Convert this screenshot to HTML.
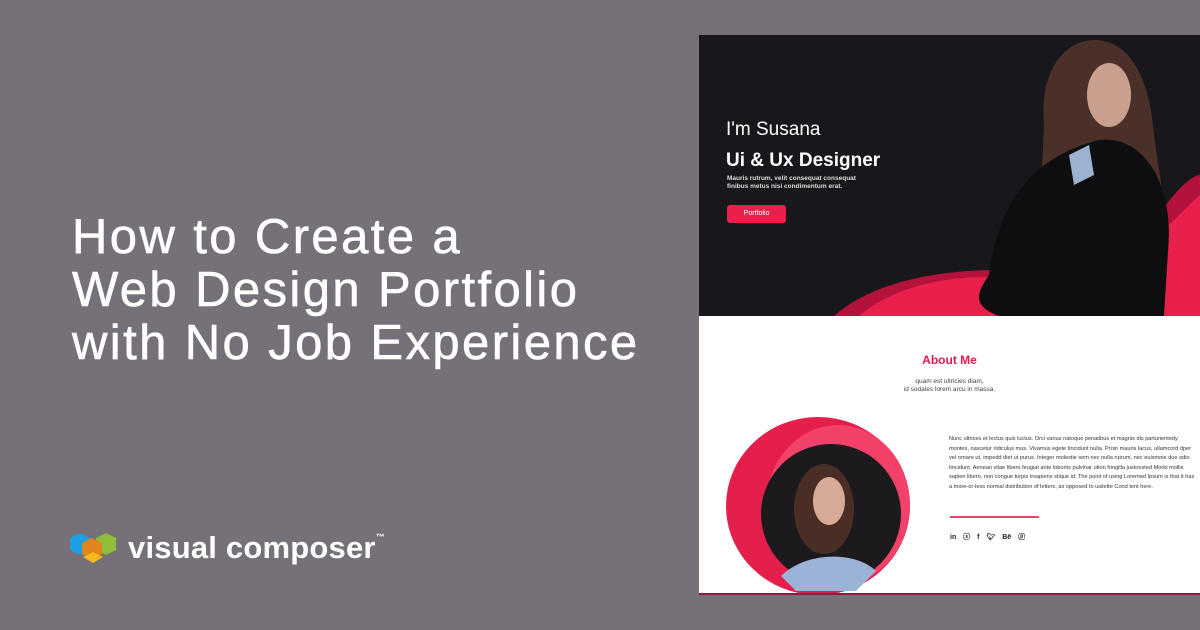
<!DOCTYPE html>
<html><head><meta charset="utf-8"><style>
*{margin:0;padding:0;box-sizing:border-box}
body{width:1200px;height:630px;background:#767179;position:relative;overflow:hidden;font-family:"Liberation Sans",sans-serif}
.title{position:absolute;left:72px;top:211px;color:#fff;font-size:49px;line-height:53px;font-weight:400;letter-spacing:2.4px;-webkit-text-stroke:0.6px #fff}
.logo{position:absolute;left:70px;top:530px;display:flex;align-items:center}
.logo span{color:#fff;font-size:31px;font-weight:700;margin-left:10px;letter-spacing:0.2px}
.logo sup{font-size:9px;vertical-align:top;position:relative;top:2px}
.shot{position:absolute;left:699px;top:35px;width:501px;height:560px;background:#fff;overflow:hidden;border-bottom:2px solid #8b1d3d}
.hero{position:absolute;left:0;top:0;width:501px;height:281px;background:#18171c;overflow:hidden}
.t1{position:absolute;left:27px;top:84px;color:#fff;font-size:19px;font-weight:300}
.t2{position:absolute;left:27px;top:115px;color:#fff;font-size:19px;font-weight:700}
.t3{position:absolute;left:28px;top:140px;color:#ddd;font-size:6.5px;line-height:7.5px;font-weight:700}
.btn{position:absolute;left:28px;top:170px;width:59px;height:18px;background:#e8204b;border-radius:3px;color:#fff;font-size:7px;text-align:center;line-height:18px}
.about{position:absolute;left:0;top:318px;width:501px;text-align:center;color:#e3194a;font-weight:700;font-size:12px}
.sub{position:absolute;left:0;top:343px;width:501px;text-align:center;color:#444;font-size:6.5px;line-height:8px}
.para{position:absolute;left:250px;top:400px;width:246px;color:#333;font-size:5.6px;line-height:9.6px}
.line{position:absolute;left:251px;top:481px;width:89px;height:2px;background:#f04368}
.soc{position:absolute;left:251px;top:497px;font-size:7px;color:#222;font-weight:700;word-spacing:5px}
</style></head><body>
<div class="title">How to Create a<br>Web Design Portfolio<br>with No Job Experience</div>
<div class="logo">
<svg width="48" height="36" viewBox="0 0 48 36">
<polygon points="0,8 10,3 20,8 20,20 10,25 0,20" fill="#1e9fe0"/>
<polygon points="26,8 36,3 46,8 46,20 36,25 26,20" fill="#8dbf3a"/>
<polygon points="12,13 22,8 32,13 32,24 22,29 12,24" fill="#e0851c"/>
<polygon points="13,27 23,22 33,27 23,33" fill="#f6b81e"/>
</svg>
<span>visual composer<sup>™</sup></span></div>
<div class="shot">
<div class="hero">
<svg width="501" height="281" style="position:absolute;left:0;top:0">
<path d="M135,281 C170,250 230,235 300,235 C380,238 420,220 460,180 C480,150 495,140 501,140 L501,281Z" fill="#b3123a"/>
<path d="M160,281 C190,255 240,240 300,242 C380,246 430,225 470,190 C490,170 501,160 501,160 L501,281Z" fill="#e8204b"/>
<path d="M345,90 C340,30 370,5 395,5 C430,5 450,40 455,100 C460,140 470,180 462,200 L340,200Z" fill="#4a3028"/>
<ellipse cx="410" cy="60" rx="22" ry="32" fill="#c9a08e"/>
<path d="M290,240 C300,160 340,120 400,105 C440,100 470,140 470,200 L465,281 L300,281 C270,270 280,255 290,240Z" fill="#0e0e10"/>
<path d="M370,120 L390,110 L395,140 L375,150Z" fill="#9bb3d0"/>
</svg>
<div class="t1">I'm Susana</div>
<div class="t2">Ui &amp; Ux Designer</div>
<div class="t3">Mauris rutrum, velit consequat consequat<br>finibus metus nisi condimentum erat.</div>
<div class="btn">Portfolio</div>
</div>
<div class="about">About Me</div>
<div class="sub">quam est ultricies diam,<br>id sodales lorem arcu in massa.</div>
<svg width="220" height="190" style="position:absolute;left:27px;top:376px">
<ellipse cx="92" cy="95" rx="92" ry="89" fill="#e51f4c"/>
<ellipse cx="112" cy="94" rx="72" ry="80" fill="#f3416a"/>
<circle cx="105" cy="103" r="70" fill="#1c1a1d"/>
<ellipse cx="98" cy="98" rx="30" ry="45" fill="#4a2e25"/>
<ellipse cx="103" cy="90" rx="16" ry="24" fill="#d8ab98"/>
<path d="M55,165 C80,140 130,140 150,160 L130,180 L70,180Z" fill="#9ab3d6"/>
</svg>
<div class="para">Nunc ultrices et lectus quis luctus. Orci varius natoque penatibus et magnis dis parturientedy montes, nascetur ridiculus mus. Vivamus egete tincidunt nulla. Proin mauris lacus, ullamcord dper vel ornare ut, impedd diet ut purus. Integer molestie sem nec nulla rutrum, nec euismoie due odio tincidunt. Aenean vitae libero feugiat ante lobortis pulvinar ution fringilla justoested Morbi mollis sapien libero, non congue turpis trsapiens stique id. The point of using Loremed Ipsum is that it has a more-or-less normal distribution of letters, as opposed to usilette Cond tent here.</div>
<div class="line"></div>
<div class="soc">in ⓢ f 🐦︎ Bē ⓟ</div>
</div>
</body></html>
